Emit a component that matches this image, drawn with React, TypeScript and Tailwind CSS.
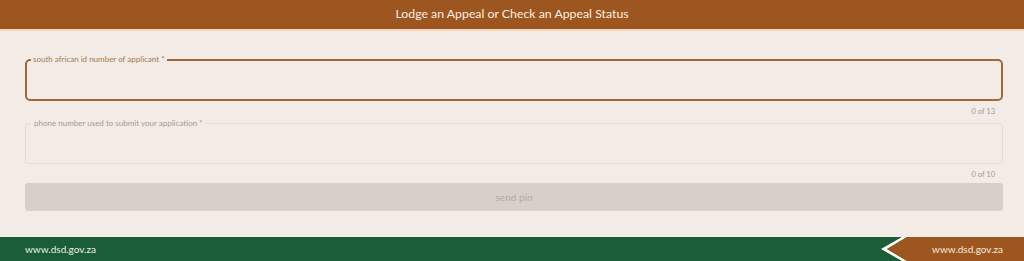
import React from "react";

export default function App() {
  const font = { fontFamily: "Lato, 'Open Sans', sans-serif" };
  return (
    <div className="w-[1024px] h-[261px] bg-[#f3ece6] flex flex-col overflow-hidden" style={font}>
      <header className="h-[31px] bg-[#9d5620] border-b-2 border-[#f3d6bd] flex items-center justify-center">
        <h1 className="text-[12.3px] text-[#fbeee2] font-normal">Lodge an Appeal or Check an Appeal Status</h1>
      </header>
      <main className="flex-1 pl-[25px] pr-[21px] pt-[28px] flex flex-col">
        <div className="relative h-[42px] border-2 border-[#9e6a3b] rounded-[5px]">
          <span className="absolute -top-[6px] left-[4px] px-[2px] bg-[#f3ece6] text-[8px] leading-[9px] text-[#a8784c]">
            south african id number of applicant *
          </span>
        </div>
        <div className="mt-[7px] h-[8px] pr-[8px] text-right text-[7.5px] leading-[8px] text-[#a29a95]">0 of 13</div>
        <div className="relative mt-[7px] h-[41px] border border-[#e3dad4] rounded-[4px]">
          <span className="absolute -top-[5px] left-[5px] px-[3px] bg-[#f3ece6] text-[8px] leading-[9px] text-[#a29a95]">
            phone number used to submit your application *
          </span>
        </div>
        <div className="mt-[7px] h-[8px] pr-[8px] text-right text-[7.5px] leading-[8px] text-[#a29a95]">0 of 10</div>
        <button className="mt-[4px] h-[28px] w-full rounded-[3px] bg-[#d8cfca] text-[10px] text-[#b3aba6]">
          send pin
        </button>
      </main>
      <footer className="h-[24px] bg-[#1a5d36] flex items-stretch justify-between">
        <span className="pl-[25px] flex items-center text-[10px] text-[#e8f0ea]">www.dsd.gov.za</span>
        <div className="relative w-[143px] flex items-center justify-end pr-[21px]">
          <svg className="absolute inset-0" width="143" height="24" viewBox="0 0 143 24">
            <polygon points="21,0 0,12 21,24 26,24 6,12 26,0" fill="#ffffff" />
            <polygon points="26,0 143,0 143,24 26,24 6,12" fill="#9d5620" />
          </svg>
          <span className="relative text-[10px] text-[#f6e8dc]">www.dsd.gov.za</span>
        </div>
      </footer>
    </div>
  );
}
